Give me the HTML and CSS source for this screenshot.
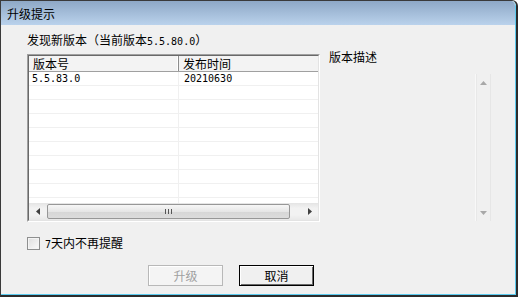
FILE: index.html
```html
<!DOCTYPE html>
<html>
<head>
<meta charset="utf-8">
<link rel="stylesheet" href="styles.css">
</head>
<body>
<div class="window">
  <div class="frame">
    <div class="titlebar"><span class="title">升级提示</span></div>
    <div class="client">
      <div class="heading">发现新版本（当前版本<span class="num">5.5.80.0</span>）</div>
      <div class="main">
        <div class="listview">
          <div class="lv-in">
            <div class="lv-header">
              <div class="hcell c1">版本号</div>
              <div class="hcell c2">发布时间</div>
            </div>
            <div class="lv-rows">
              <div class="row"><div class="cell c1 num">5.5.83.0</div><div class="cell c2 num">20210630</div></div>
              <div class="row"><div class="cell c1"></div><div class="cell c2"></div></div>
              <div class="row"><div class="cell c1"></div><div class="cell c2"></div></div>
              <div class="row"><div class="cell c1"></div><div class="cell c2"></div></div>
              <div class="row"><div class="cell c1"></div><div class="cell c2"></div></div>
              <div class="row"><div class="cell c1"></div><div class="cell c2"></div></div>
              <div class="row"><div class="cell c1"></div><div class="cell c2"></div></div>
              <div class="row"><div class="cell c1"></div><div class="cell c2"></div></div>
              <div class="row"><div class="cell c1"></div><div class="cell c2"></div></div>
              <div class="row"><div class="cell c1"></div><div class="cell c2"></div></div>
            </div>
            <div class="hscroll">
              <div class="sb-btn"><svg width="4" height="7" viewBox="0 0 4 7"><path d="M4 0 L0 3.5 L4 7 Z" fill="#404040"/></svg></div>
              <div class="sb-track">
                <div class="sb-thumb">
                  <svg width="7" height="5" viewBox="0 0 7 5"><path d="M0.5 0v5M3.5 0v5M6.5 0v5" stroke="#555" stroke-width="1"/></svg>
                </div>
              </div>
              <div class="sb-btn"><svg width="4" height="7" viewBox="0 0 4 7"><path d="M0 0 L4 3.5 L0 7 Z" fill="#404040"/></svg></div>
            </div>
          </div>
        </div>
        <div class="desc">
          <div class="desc-label">版本描述</div>
          <div class="desc-box">
            <div class="vscroll">
              <div class="vs-btn"><svg width="7" height="4" viewBox="0 0 7 4"><path d="M0 4 L3.5 0 L7 4 Z" fill="#a8a8a8"/></svg></div>
              <div class="vs-track"></div>
              <div class="vs-btn"><svg width="7" height="4" viewBox="0 0 7 4"><path d="M0 0 L3.5 4 L7 0 Z" fill="#a8a8a8"/></svg></div>
            </div>
          </div>
        </div>
      </div>
      <div class="remind"><span class="checkbox"></span><span class="remind-text"><span class="num">7</span>天内不再提醒</span></div>
      <div class="buttons">
        <button class="btn btn-disabled">升级</button>
        <button class="btn btn-default">取消</button>
      </div>
    </div>
  </div>
</div>
</body>
</html>
```
FILE: styles.css
```css
html, body {
  margin: 0;
  padding: 0;
  background: #ffffff;
}
body {
  font-family: "Noto Sans CJK SC", "Noto Sans", sans-serif;
  font-size: 12px;
  color: #000;
}
.window {
  width: 518px;
  height: 297px;
  box-sizing: border-box;
  border-top: 1px solid #3a3a3a;
  border-left: 1px solid #3a3a3a;
  border-right: 2px solid #2c2c2c;
  border-bottom: 2px solid #2c2c2c;
  border-top-right-radius: 6px;
  overflow: hidden;
  display: flex;
}
.frame {
  flex: 1;
  display: flex;
  flex-direction: column;
  border-right: 1px solid #5ccbef;
  border-bottom: 1px solid #5ccbef;
  border-top-right-radius: 5px;
  overflow: hidden;
}
.titlebar {
  height: 24px;
  box-sizing: border-box;
  padding: 6px 0 0 6px;
  background: linear-gradient(to bottom, #8ea8c6, #bad2ec);
}
.title {
  display: block;
  line-height: 14px;
}
.client {
  flex: 1;
  background: #f0f0f0;
  padding: 8px 0 0 26px;
  display: flex;
  flex-direction: column;
}
.num {
  font-family: "DejaVu Sans Mono", "Liberation Mono", monospace;
  font-size: 10px;
}
.heading {
  line-height: 14px;
  height: 14px;
}
.main {
  display: flex;
  margin-top: 3px;
}
.listview {
  margin-top: 4px;
  width: 293px;
  height: 168px;
  box-sizing: border-box;
  border: 1px solid;
  border-color: #a0a0a0 #ffffff #ffffff #a0a0a0;
}
.lv-in {
  height: 100%;
  box-sizing: border-box;
  border: 1px solid;
  border-color: #696969 #e3e3e3 #e3e3e3 #696969;
  background: #fff;
  display: flex;
  flex-direction: column;
}
.lv-header {
  height: 16px;
  box-sizing: border-box;
  display: flex;
  background: #f3f3f3;
  border-bottom: 1px solid #a0a0a0;
}
.hcell {
  line-height: 15px;
  padding-left: 4px;
  box-sizing: border-box;
}
.hcell.c1 {
  width: 150px;
  border-right: 1px solid #8c8c8c;
  box-shadow: inset -1px 0 0 #ffffff;
}
.hcell.c2 { flex: 1; }
.lv-rows {
  flex: 1;
  overflow: hidden;
}
.row {
  height: 14px;
  box-sizing: border-box;
  display: flex;
  border-bottom: 1px solid #f0f0f0;
}
.cell {
  line-height: 13px;
  box-sizing: border-box;
}
.cell.c1 {
  width: 150px;
  padding-left: 3px;
  border-right: 1px solid #f0f0f0;
}
.cell.c2 {
  flex: 1;
  padding-left: 5px;
}
.hscroll {
  height: 17px;
  display: flex;
  background: linear-gradient(to bottom, #e4e4e4, #f2f2f2 30%, #f2f2f2 70%, #e8e8e8);
}
.sb-btn {
  width: 17px;
  display: flex;
  align-items: center;
  justify-content: center;
}
.sb-track {
  flex: 1;
  padding: 1px 11px 1px 1px;
  display: flex;
}
.sb-thumb {
  flex: 1;
  box-sizing: border-box;
  border: 1px solid #979797;
  border-radius: 2px;
  background: linear-gradient(to bottom, #f6f6f6, #e6e6e6 50%, #d6d6d6 51%, #dcdcdc);
  display: flex;
  align-items: center;
  justify-content: center;
}
.desc {
  margin-left: 9px;
  display: flex;
  flex-direction: column;
}
.desc-label {
  line-height: 14px;
  height: 14px;
}
.desc-box {
  margin-top: 10px;
  width: 162px;
  height: 147px;
  display: flex;
  justify-content: flex-end;
}
.vscroll {
  width: 16px;
  box-sizing: border-box;
  display: flex;
  flex-direction: column;
  background: #f0f0f0;
  border-left: 1px solid #f8f8f8;
  border-right: 1px solid #e6e6e6;
  box-shadow: inset 1px 0 0 #e8e8e8;
}
.vs-btn {
  height: 17px;
  display: flex;
  align-items: center;
  justify-content: center;
}
.vs-track { flex: 1; }
.remind {
  margin-top: 15px;
  height: 13px;
  display: flex;
  align-items: center;
}
.checkbox {
  width: 13px;
  height: 13px;
  box-sizing: border-box;
  border: 1px solid #8e8f8f;
  background: linear-gradient(135deg, #dedede, #fbfbfb);
  box-shadow: inset 0 0 0 1px #f4f4f4;
}
.remind-text {
  margin-left: 5px;
  line-height: 13px;
}
.buttons {
  margin-top: 15px;
  margin-left: 121px;
  display: flex;
  gap: 16px;
}
.btn {
  width: 75px;
  height: 21px;
  margin: 0;
  padding: 0;
  font-family: "Noto Sans CJK SC", sans-serif;
  font-size: 12px;
  line-height: 19px;
  box-sizing: border-box;
  background: #f0f0f0;
}
.btn-disabled {
  color: #a0a0a0;
  border: 1px solid #b8b8b8;
  box-shadow: inset 1px 1px 0 #ffffff;
  background: #f4f4f4;
}
.btn-default {
  color: #000;
  border: 1px solid #000;
  box-shadow: inset 1px 1px 0 #ffffff, inset -1px -1px 0 #696969;
}
```
